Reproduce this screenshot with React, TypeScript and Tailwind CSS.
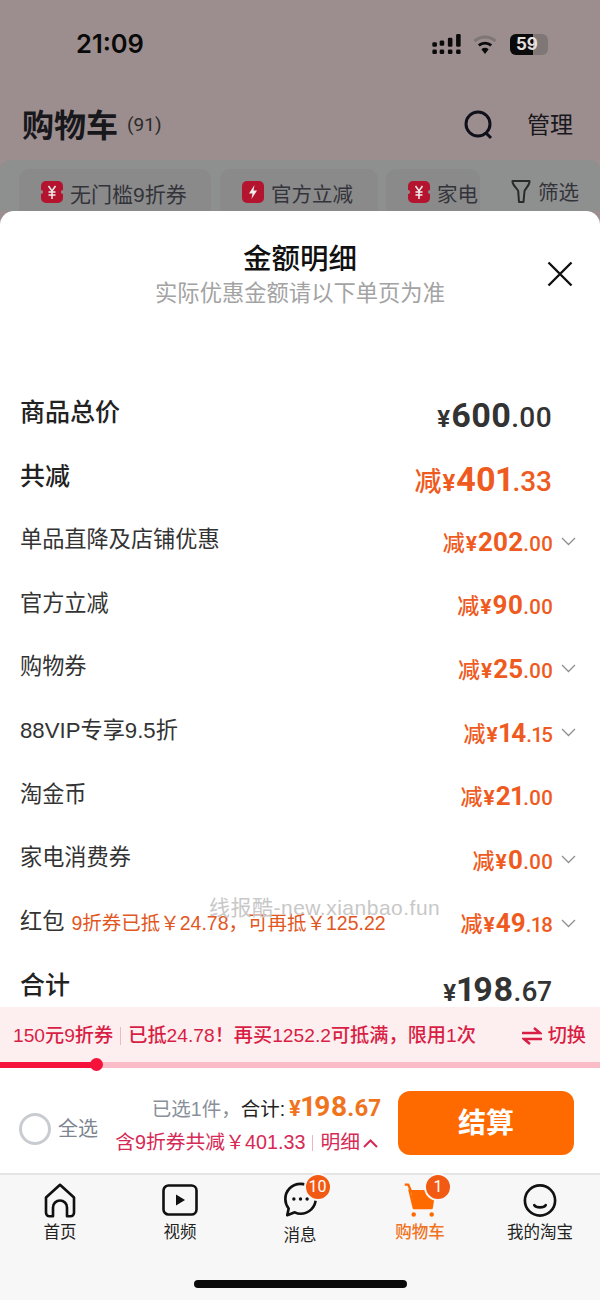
const cjk = "font-['Liberation_Sans','Noto_Sans_CJK_SC',sans-serif]";
const cjkOnly = "font-['Noto_Sans_CJK_SC',sans-serif]";
const nums = "font-['Roboto',sans-serif] proportional-nums";

type Row = {
  label: string;
  whole: string;
  cents: string;
  chevron?: boolean;
  note?: string;
};

const rows: Row[] = [
  { label: "单品直降及店铺优惠", whole: "202", cents: ".00", chevron: true },
  { label: "官方立减", whole: "90", cents: ".00" },
  { label: "购物券", whole: "25", cents: ".00", chevron: true },
  { label: "88VIP专享9.5折", whole: "14", cents: ".15", chevron: true },
  { label: "淘金币", whole: "21", cents: ".00" },
  { label: "家电消费券", whole: "0", cents: ".00", chevron: true },
  { label: "红包", whole: "49", cents: ".18", chevron: true, note: "9折券已抵￥24.78，可再抵￥125.22" },
];

const Coupon = ({ bolt }: { bolt?: boolean }) => (
  <svg width="22" height="22" viewBox="0 0 22 22" className="shrink-0">
    <rect x="0" y="0" width="22" height="22" rx="5" fill="#b4142e" />
    {bolt ? (
      <path d="M12.500 4 7 12.500h3.500L9.500 18 15 9.500h-3.500z" fill="#eee" />
    ) : (
      <>
        <circle cx="0" cy="11" r="2" fill="#8f8f8f" />
        <circle cx="22" cy="11" r="2" fill="#8f8f8f" />
        <path d="M7.500 5 11 10l3.500-5M7.500 11h7M7.500 14h7M11 10v8" stroke="#eee" strokeWidth="1.500" fill="none" />
      </>
    )}
  </svg>
);

const Chevron = () => (
  <svg width="15" height="9" viewBox="0 0 15 9">
    <path d="M1 1l6.500 6.500L14 1" stroke="#8f8f8f" strokeWidth="1.300" fill="none" />
  </svg>
);

const StatusIcons = () => (
  <div className="mt-[7px] flex items-center gap-[11px]">
    <svg width="31" height="21" viewBox="0 0 31 23">
      <g fill="#0a0a0a">
        <rect x="0" y="9" width="5" height="5" rx="1.500" />
        <rect x="0" y="17" width="5" height="5" rx="1.500" />
        <rect x="8" y="7" width="5" height="6" rx="1.500" />
        <rect x="8" y="17" width="5" height="5" rx="1.500" />
        <rect x="17" y="4" width="5" height="10" rx="1.500" />
        <rect x="17" y="17" width="5" height="5" rx="1.500" />
        <rect x="26" y="0" width="5" height="14" rx="1.500" />
        <rect x="26" y="17" width="5" height="5" rx="1.500" />
      </g>
    </svg>
    <svg width="24" height="21" viewBox="0 0 24 22">
      <path d="M1 7.500a16 16 0 0 1 22 0" stroke="#7f7676" strokeWidth="3" fill="none" />
      <path d="M5.500 12a10 10 0 0 1 13 0" stroke="#0a0a0a" strokeWidth="3" fill="none" />
      <path d="M12 21l-3.800-5a6 6 0 0 1 7.600 0z" fill="#0a0a0a" />
    </svg>
    <div className="relative ml-[2px] flex h-[21px] w-[38px] items-center overflow-hidden rounded-[6px] bg-[#7f7676]">
      <div className="h-full w-[23px] bg-[#0a0a0a]" />
      <span className="absolute inset-0 pl-[6px] font-['Inter',sans-serif] text-[17px] leading-[21px] font-bold text-[#e4e0e0]">59</span>
    </div>
  </div>
);

const HomeIcon = () => (
  <svg width="34" height="35" viewBox="0 0 36 40" fill="none" stroke="#111" strokeWidth="3" strokeLinejoin="round">
    <path d="M2 16.500 18 2l16 14.500V34a4 4 0 0 1-4 4h-4V28a8 8 0 0 0-16 0v10H6a4 4 0 0 1-4-4z" />
  </svg>
);

const VideoIcon = () => (
  <svg width="36" height="32" viewBox="0 0 36 32" fill="none">
    <rect x="1.500" y="1.500" width="33" height="29" rx="5" stroke="#111" strokeWidth="2.600" />
    <path d="M14 10.500v11l9-5.500z" fill="#111" />
  </svg>
);

const ChatIcon = () => (
  <svg width="35" height="36" viewBox="0 0 36 38" fill="none">
    <path d="M18 2C9 2 2 9 2 18c0 4 1.500 7.500 3.500 10L4 35l8-3c2 1 4 1.500 6 1.500 9 0 16-7 16-15.500S27 2 18 2z" stroke="#111" strokeWidth="2.800" strokeLinejoin="round" />
    <circle cx="11" cy="18" r="1.800" fill="#111" />
    <circle cx="18" cy="18" r="1.800" fill="#111" />
    <circle cx="25" cy="18" r="1.800" fill="#111" />
  </svg>
);

const CartIcon = () => (
  <svg width="34" height="36" viewBox="0 0 36 40" fill="none">
    <path d="M1 3h4l3 7h26l-3 19H11L6 8" stroke="#ff6a00" strokeWidth="2.500" strokeLinejoin="round" />
    <path d="M8 10h26l-3 19H11z" fill="#ff6a00" />
    <circle cx="11" cy="36" r="2.500" fill="#ff6a00" />
    <circle cx="31" cy="36" r="2.500" fill="#ff6a00" />
  </svg>
);

const SmileIcon = () => (
  <svg width="34" height="35" viewBox="0 0 36 36" fill="none" stroke="#111" strokeWidth="2.800">
    <circle cx="18" cy="18" r="16" />
    <path d="M12 23c2 3 10 3 12 0" strokeLinecap="round" />
  </svg>
);

const Amount = ({ whole, cents }: { whole: string; cents: string }) => (
  <span className={`flex items-baseline ${nums} font-bold text-[#ef5a1e]`}>
    <span className={`${cjkOnly} text-[22px] font-medium`}>减</span>
    <span className="mx-[1px] text-[21px]">¥</span>
    <span className="text-[26px]">{whole}</span>
    <span className="text-[20.500px] font-medium">{cents}</span>
  </span>
);

const Tab = ({
  label,
  icon,
  badge,
  active,
  low,
}: {
  label: string;
  icon: React.ReactNode;
  badge?: string;
  active?: boolean;
  low?: boolean;
}) => (
  <div className="flex w-[120px] flex-col items-center">
    <div className="relative flex h-[36px] items-center justify-center">
      {icon}
      {badge && (
        <span className="absolute top-[-9px] left-[21px] flex h-[28px] w-[28px] items-center justify-center rounded-full border-2 border-[#f7f7f7] bg-[#f25a14] font-['Roboto',sans-serif] text-[16px] text-white">
          {badge}
        </span>
      )}
    </div>
    <span className={`${low ? "mt-[6px]" : "mt-[3px]"} text-[16.500px] leading-[22px] ${active ? "font-medium text-[#f0731e]" : "text-[#222]"}`}>
      {label}
    </span>
  </div>
);

export default function App() {
  return (
    <div className={`${cjk} flex h-[1300px] w-[600px] flex-col overflow-hidden bg-[#9c8e8e]`}>
      {/* status bar */}
      <div className="flex h-[90px] shrink-0 items-start justify-between pt-[27px] pr-[52px] pl-[76px]">
        <span className="font-['Inter',sans-serif] text-[25.500px] leading-[34px] font-semibold text-[#0a0a0a]">21:09</span>
        <StatusIcons />
      </div>

      {/* cart header */}
      <div className="flex h-[70px] shrink-0 items-center pr-[27px] pl-[22px]">
        <span className="pt-[2px] text-[32px] leading-[40px] font-bold text-[#17171c]">购物车</span>
        <span className="ml-[9px] font-['Roboto',sans-serif] text-[19px] text-[#2a2a2a]">(91)</span>
        <svg width="30" height="32" viewBox="0 0 30 32" fill="none" stroke="#10101a" strokeWidth="3" className="mr-[34px] ml-auto">
          <circle cx="15" cy="15" r="12" />
          <path d="M23 24l5 5" />
        </svg>
        <span className="pt-[1px] text-[23px] text-[#17171c]">管理</span>
      </div>

      {/* filter chips, cut off by the sheet */}
      <div className="flex h-[51px] shrink-0 items-start rounded-t-[10px] bg-[#8e8f8f] pt-[9px] pl-[19px]">
        <div className="flex h-[50px] w-[192px] items-start gap-[7px] rounded-[10px] bg-[#8a8a8a] pt-[12px] pl-[22px] text-[21px] leading-[28px] text-[#33333a]">
          <Coupon />
          无门槛9折券
        </div>
        <div className="ml-[9px] flex h-[50px] w-[158px] items-start gap-[7px] rounded-[10px] bg-[#8a8a8a] pt-[12px] pl-[22px] text-[20.500px] leading-[28px] text-[#33333a]">
          <Coupon bolt />
          官方立减
        </div>
        <div className="ml-[8px] flex h-[50px] w-[94px] items-start gap-[7px] rounded-[10px] bg-[#8a8a8a] pt-[12px] pl-[22px] text-[20.500px] leading-[28px] text-[#33333a]">
          <Coupon />
          家电
        </div>
        <div className="ml-[31px] flex items-start gap-[7px] pt-[10px] text-[20.500px] leading-[28px] text-[#33333a]">
          <svg width="20" height="25" viewBox="0 0 20 25" fill="none" stroke="#2a2a2a" strokeWidth="2">
            <path d="M1.500 2h17c.5 4-4 7-5 10l-1 11H8l-.8-11C6 9 1 6 1.500 2z" strokeLinejoin="round" />
          </svg>
          筛选
        </div>
      </div>

      {/* detail sheet */}
      <div className="relative flex min-h-0 flex-1 flex-col rounded-t-[14px] bg-white">
        <div className="relative h-[168px] shrink-0 pt-[29px] text-center">
          <div className="text-[28.500px] leading-[38px] font-medium text-[#111]">金额明细</div>
          <div className="text-[22.300px] leading-[32px] text-[#a3a3a3]">实际优惠金额请以下单页为准</div>
          <svg width="26" height="26" viewBox="0 0 26 26" className="absolute top-[50px] right-[27px]" stroke="#111" strokeWidth="2.400">
            <path d="M1.500 1.500l23 23M24.500 1.500l-23 23" />
          </svg>
        </div>

        <div className="flex h-[64px] shrink-0 items-center justify-between pr-[48px] pl-[20px]">
          <span className="pt-[4px] text-[25px] font-medium text-[#222]">商品总价</span>
          <span className={`flex items-baseline pt-[8px] ${nums} font-bold text-[#333]`}>
            <span className="mr-[1px] text-[24px]">¥</span>
            <span className="text-[34px]">600</span>
            <span className="text-[28px] font-medium">.00</span>
          </span>
        </div>
        <div className="flex h-[63px] shrink-0 items-center justify-between pr-[48px] pl-[20px]">
          <span className="pt-[4px] text-[25px] font-medium text-[#222]">共减</span>
          <span className={`flex items-baseline pt-[10px] ${nums} font-bold text-[#ef5a1e]`}>
            <span className={`${cjkOnly} text-[27px] font-medium`}>减</span>
            <span className="mx-[1px] text-[24px]">¥</span>
            <span className="text-[34px]">401</span>
            <span className="text-[28px] font-medium">.33</span>
          </span>
        </div>

        {rows.map((row) => (
          <div key={row.label} className="flex h-[63.600px] shrink-0 items-center pr-[24px] pl-[20px]">
            <span className="pt-[4px] text-[22.200px] text-[#333]">{row.label}</span>
            {row.note && (
              <span className="ml-[7px] pt-[8px] text-[19.500px] text-[#e2571f]">{row.note}</span>
            )}
            <span className="ml-auto pt-[9px]">
              <Amount whole={row.whole} cents={row.cents} />
            </span>
            <span className="flex w-[23px] justify-end pt-[8px]">{row.chevron && <Chevron />}</span>
          </div>
        ))}

        <div className="flex h-[56px] shrink-0 items-start justify-between pt-[13px] pr-[48px] pl-[20px]">
          <span className="pt-[3px] text-[25px] font-medium text-[#222]">合计</span>
          <span className={`flex items-baseline ${nums} font-bold text-[#333]`}>
            <span className="mr-[1px] text-[24px]">¥</span>
            <span className="text-[34px]">198</span>
            <span className="text-[28px] font-medium">.67</span>
          </span>
        </div>

        {/* watermark */}
        <span className="absolute top-[684px] left-[209px] text-[21px] leading-[26px] tracking-[0.500px] text-[#c8c8c8]">
          线报酷-new.xianbao.fun
        </span>

        {/* coupon progress */}
        <div className="flex h-[55px] shrink-0 items-center bg-[#fdeef0] pt-[3px] pr-[14px] pl-[13px] text-[19.200px] font-medium text-[#d81e44]">
          <span>150元9折券</span>
          <span className="mx-[7px] h-[18px] w-px bg-[#f0b7c2]" />
          <span>已抵24.78！再买1252.2可抵满，限用1次</span>
          <svg width="20" height="18" viewBox="0 0 20 18" fill="none" stroke="#d81e44" strokeWidth="2.500" className="mr-[6px] ml-auto">
            <path d="M0 6h18l-6-5M20 12H2l6 5" />
          </svg>
          <span>切换</span>
        </div>
        <div className="relative h-[6px] shrink-0 bg-[#fbbcc8]">
          <div className="h-full w-[92px] bg-[#f5133c]" />
          <span className="absolute top-[-4px] left-[90px] h-[13px] w-[13px] rounded-full bg-[#f5133c]" />
        </div>

        {/* checkout */}
        <div className="flex h-[105px] shrink-0 items-center pr-[26px] pl-[19px]">
          <div className="flex items-center pt-[16px]">
            <span className="h-[32px] w-[32px] rounded-full border-[3px] border-[#c8ccd0]" />
            <span className="ml-[7px] text-[20px] text-[#7d8590]">全选</span>
          </div>
          <div className="mr-[17px] ml-auto flex flex-col items-end pt-[3px]">
            <div className="flex h-[38px] items-baseline text-[19.500px]">
              <span className="text-[#8a909a]">已选1件，</span>
              <span className="text-[#222]">合计:</span>
              <span className={`ml-[4px] flex items-baseline ${nums} font-bold text-[#f0731e]`}>
                <span className="text-[22px]">¥</span>
                <span className="text-[28px]">198</span>
                <span className="text-[24px]">.67</span>
              </span>
            </div>
            <div className="mt-[4px] flex h-[30px] items-center text-[19.800px] text-[#d62a56]">
              含9折券共减￥401.33
              <span className="mx-[7px] h-[16px] w-px bg-[#eeb4c4]" />
              明细
              <svg width="15" height="9" viewBox="0 0 15 9" fill="none" stroke="#d62a56" strokeWidth="2" className="mr-[3px] ml-[3px]">
                <path d="M1 8l6.500-6.500L14 8" />
              </svg>
            </div>
          </div>
          <button type="button" className="mt-[4px] h-[64px] w-[176px] rounded-[12px] bg-[#ff6a00] pt-[3px] text-[28px] font-bold text-white">
            结算
          </button>
        </div>

        {/* tab bar */}
        <div className="relative flex min-h-0 flex-1 items-start border-t-2 border-[#e4e4e4] bg-[#f7f7f7] pt-[7px]">
          <Tab label="首页" icon={<HomeIcon />} />
          <Tab label="视频" icon={<VideoIcon />} />
          <Tab label="消息" icon={<ChatIcon />} badge="10" low />
          <Tab label="购物车" icon={<CartIcon />} badge="1" active />
          <Tab label="我的淘宝" icon={<SmileIcon />} />
          <span className="absolute bottom-[12px] left-[194px] h-[8px] w-[213px] rounded-full bg-[#0a0a0a]" />
        </div>
      </div>
    </div>
  );
}
